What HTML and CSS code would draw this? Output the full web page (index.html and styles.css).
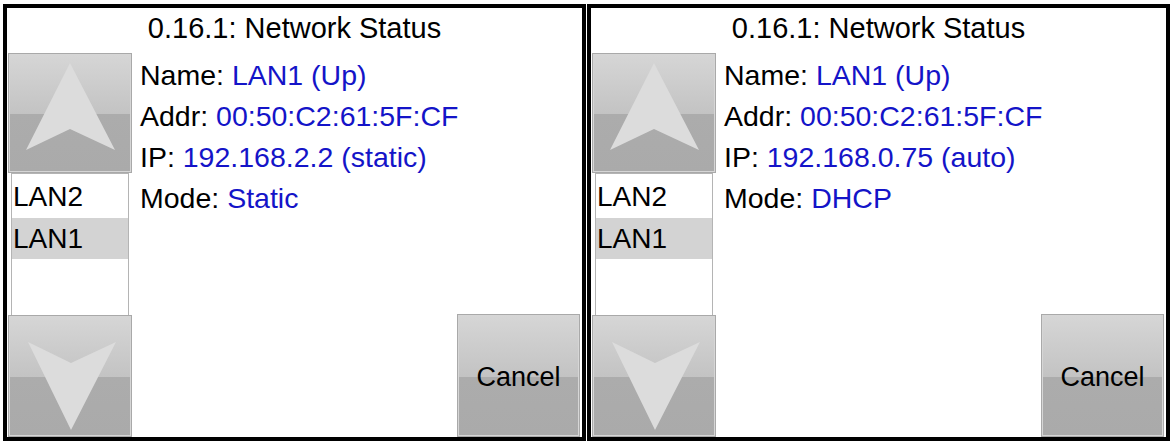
FILE: index.html
```html
<!DOCTYPE html>
<html>
<head>
<meta charset="utf-8">
<link rel="stylesheet" href="styles.css">
</head>
<body>
<div class="screens">
  <div class="panel">
    <div class="title">0.16.1: Network Status</div>
    <div class="main">
      <div class="nav">
        <div class="btn btn-up">
          <svg class="arrow" viewBox="0 0 122 118"><polygon points="61,9 17,96 61,75 106,96"/></svg>
        </div>
        <div class="list">
          <div class="row row-first">LAN2</div>
          <div class="row row-sel">LAN1</div>
        </div>
        <div class="btn btn-down">
          <svg class="arrow" viewBox="0 0 122 120"><polygon points="19,26 62,47 107,26 62,114"/></svg>
        </div>
      </div>
      <div class="info">
        <div class="line">Name: <span class="val">LAN1 (Up)</span></div>
        <div class="line">Addr: <span class="val">00:50:C2:61:5F:CF</span></div>
        <div class="line">IP: <span class="val">192.168.2.2 (static)</span></div>
        <div class="line">Mode: <span class="val">Static</span></div>
        <div class="btn btn-cancel">Cancel</div>
      </div>
    </div>
  </div>
  <div class="panel">
    <div class="title">0.16.1: Network Status</div>
    <div class="main">
      <div class="nav">
        <div class="btn btn-up">
          <svg class="arrow" viewBox="0 0 122 118"><polygon points="61,9 17,96 61,75 106,96"/></svg>
        </div>
        <div class="list">
          <div class="row row-first">LAN2</div>
          <div class="row row-sel">LAN1</div>
        </div>
        <div class="btn btn-down">
          <svg class="arrow" viewBox="0 0 122 120"><polygon points="19,26 62,47 107,26 62,114"/></svg>
        </div>
      </div>
      <div class="info">
        <div class="line">Name: <span class="val">LAN1 (Up)</span></div>
        <div class="line">Addr: <span class="val">00:50:C2:61:5F:CF</span></div>
        <div class="line">IP: <span class="val">192.168.0.75 (auto)</span></div>
        <div class="line">Mode: <span class="val">DHCP</span></div>
        <div class="btn btn-cancel">Cancel</div>
      </div>
    </div>
  </div>
</div>
</body>
</html>
```
FILE: styles.css
```css
html, body {
  margin: 0;
  padding: 0;
  background: #ffffff;
}
body {
  font-family: "Liberation Sans", Arial, sans-serif;
  color: #000;
}
.screens {
  display: flex;
  gap: 1px;
  padding: 4px 0 0 3px;
}
.panel {
  box-sizing: border-box;
  width: 583px;
  height: 437px;
  border: 4px solid #000;
  background: #fff;
  display: flex;
  flex-direction: column;
}
.title {
  height: 45px;
  line-height: 41px;
  font-size: 29px;
  text-align: center;
  flex: none;
}
.main {
  flex: 1;
  display: flex;
  min-height: 0;
}
.nav {
  width: 124px;
  margin-left: 1px;
  display: flex;
  flex-direction: column;
  flex: none;
}
.btn {
  box-sizing: border-box;
  border: 1px solid #a9a9a9;
  box-shadow: inset 0 0 0 1px #d6d6d6;
  background: linear-gradient(to bottom, #d6d6d6 0%, #c3c3c3 51%, #acacac 51%, #aaaaaa 100%);
}
.btn-up {
  height: 120px;
  flex: none;
}
.btn-down {
  flex: 1;
}
.arrow {
  display: block;
  width: 100%;
  height: 100%;
}
.arrow polygon {
  fill: #dcdcdc;
}
.list {
  box-sizing: border-box;
  height: 142px;
  margin: 0 3px;
  border: 1px solid #b4b4b4;
  border-bottom: 0;
  background: #fff;
  flex: none;
}
.row {
  font-size: 28px;
  padding-left: 1px;
  height: 41px;
  line-height: 41px;
}
.row-first {
  height: 44px;
  line-height: 46px;
}
.row-sel {
  background: #d3d3d3;
}
.info {
  flex: 1;
  display: flex;
  flex-direction: column;
  padding-left: 8px;
  padding-top: 2px;
}
.line {
  font-size: 28.5px;
  line-height: 41px;
  white-space: nowrap;
}
.val {
  color: #1414c8;
}
.btn-cancel {
  margin-top: auto;
  align-self: flex-end;
  margin-right: 2px;
  width: 123px;
  height: 123px;
  font-size: 27px;
  display: flex;
  align-items: center;
  justify-content: center;
  padding-top: 4px;
}
```
